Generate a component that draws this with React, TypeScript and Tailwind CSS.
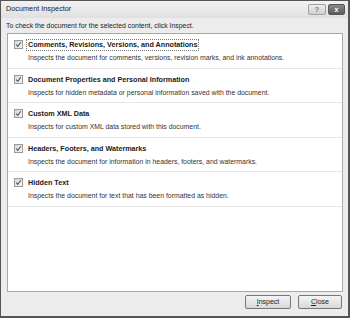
import React from "react";

const items = [
  { title: "Comments, Revisions, Versions, and Annotations", desc: "Inspects the document for comments, versions, revision marks, and ink annotations.", focus: true },
  { title: "Document Properties and Personal Information", desc: "Inspects for hidden metadata or personal information saved with the document." },
  { title: "Custom XML Data", desc: "Inspects for custom XML data stored with this document." },
  { title: "Headers, Footers, and Watermarks", desc: "Inspects the document for information in headers, footers, and watermarks." },
  { title: "Hidden Text", desc: "Inspects the document for text that has been formatted as hidden." },
];

function Check() {
  return (
    <div className="w-[9px] h-[9px] border border-[#9a9a9a] bg-gradient-to-br from-[#d8d8d8] to-[#f6f6f6] flex items-center justify-center shrink-0">
      <svg width="7" height="7" viewBox="0 0 7 7">
        <path d="M1.2 3.6 L2.8 5.3 L5.8 1.2" stroke="#555" strokeWidth="1.1" fill="none" />
      </svg>
    </div>
  );
}

export default function App() {
  return (
    <div className="w-[350px] h-[318px] bg-white" style={{ fontFamily: '"Liberation Sans", Arial, sans-serif' }}>
      <div className="w-[350px] h-[318px] border border-[#555] border-b-2 border-r-2 bg-[#ececec] flex flex-col">
        <div className="h-[17px] flex items-center justify-between pl-[5px] pr-[3px] bg-gradient-to-b from-[#f2f2f2] to-[#e0e0e0]">
          <span className="text-[7.3px] text-[#222]">Document Inspector</span>
          <div className="flex gap-[2px]">
            <div className="w-[18px] h-[11px] rounded-[2px] border border-[#a0a0a0] bg-gradient-to-b from-[#eee] to-[#cfcfcf] flex items-center justify-center text-[7px] text-[#777] font-bold leading-none">?</div>
            <div className="w-[17px] h-[11px] rounded-[2px] border border-[#555] bg-gradient-to-b from-[#8a8a8a] to-[#5a5a5a] flex items-center justify-center text-[7px] text-white font-bold leading-none">x</div>
          </div>
        </div>
        <div className="px-[5px] pt-[2px] text-[6.9px] text-[#222] h-[15px] leading-[12px]">
          To check the document for the selected content, click Inspect.
        </div>
        <div className="ml-[6px] mr-[5px] h-[259px] border border-[#a8a8a8] bg-white">
          {items.map((it, i) => (
            <div key={i} className="h-[34.5px] border-b border-[#e8e8e8] flex pt-[5px] pl-[6px]">
              <div className="pt-[1px]"><Check /></div>
              <div className="ml-[3px] flex flex-col items-start">
                <span className={`text-[7.2px] font-bold text-[#1a1a1a] leading-[10px] px-[1px] ${it.focus ? "border border-dotted border-[#777]" : "border border-transparent"}`}>{it.title}</span>
                <span className="text-[6.9px] text-[#333] leading-[11px] ml-[2px] mt-[1px]">{it.desc}</span>
              </div>
            </div>
          ))}
        </div>
        <div className="flex justify-end gap-[7px] pr-[6px] pt-[3px]">
          <div className="w-[46px] h-[14px] rounded-[2px] border border-[#777] bg-gradient-to-b from-[#f4f4f4] to-[#d8d8d8] flex items-center justify-center text-[7px] text-[#222]"><span><span className="underline">I</span>nspect</span></div>
          <div className="w-[44px] h-[14px] rounded-[2px] border border-[#777] bg-gradient-to-b from-[#f4f4f4] to-[#d8d8d8] flex items-center justify-center text-[7px] text-[#222]"><span><span className="underline">C</span>lose</span></div>
        </div>
      </div>
    </div>
  );
}
